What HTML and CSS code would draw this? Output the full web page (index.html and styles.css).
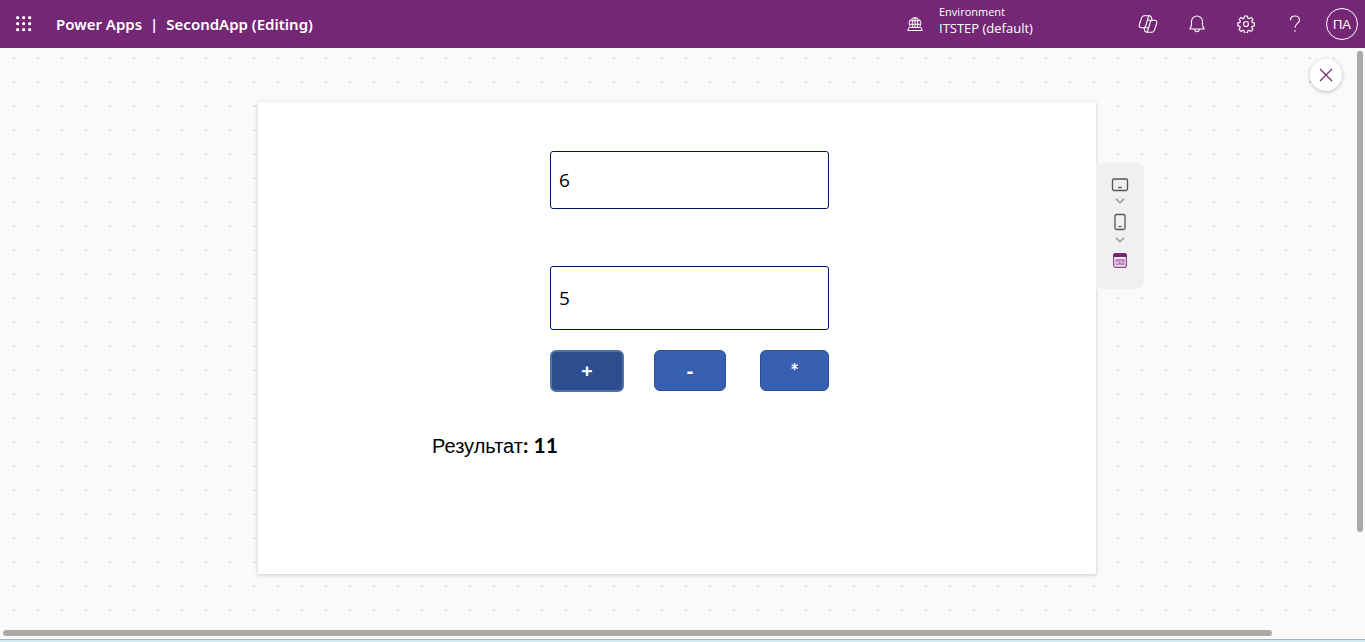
FILE: index.html
```html
<!DOCTYPE html>
<html lang="en">
<head>
<meta charset="utf-8">
<meta name="viewport" content="width=device-width, initial-scale=1">
<title>Power Apps | SecondApp (Editing)</title>
<link rel="stylesheet" href="styles.css">
</head>
<body>
<header class="topbar">
  <button class="icon-button" aria-label="App launcher">
    <svg width="16" height="16" viewBox="0 0 16 16" fill="currentColor"><circle cx="1.7" cy="1.7" r="1.6"/><circle cx="7.7" cy="1.7" r="1.6"/><circle cx="13.7" cy="1.7" r="1.6"/><circle cx="1.7" cy="7.7" r="1.6"/><circle cx="7.7" cy="7.7" r="1.6"/><circle cx="13.7" cy="7.7" r="1.6"/><circle cx="1.7" cy="13.7" r="1.6"/><circle cx="7.7" cy="13.7" r="1.6"/><circle cx="13.7" cy="13.7" r="1.6"/></svg>
  </button>
  <h1 class="title"><a class="home" href="#">Power Apps</a><span>|</span><span>SecondApp (Editing)</span></h1>
  <button class="environment">
    <svg width="16" height="16" viewBox="0 0 16 16" fill="none" stroke="currentColor" stroke-width="1"><path d="M3.200 10.500A5.700 5.700 0 1 1 12.800 10.500M2.800 4.700h10.400M2.400 8.300h11.200M5.800 11C4.800 8 5 3.500 8 1.500C11 3.500 11.200 8 10.200 11M8 1.500V11"/><path d="M3.500 11.500H2L.7 14.500H15.300L14 11.500H12.500M3.500 11.500h9"/></svg>
    <span class="environment-text"><span class="environment-label">Environment</span><span class="environment-name">ITSTEP (default)</span></span>
  </button>
  <nav class="tools" aria-label="Tools">
    <button class="icon-button tool" aria-label="Copilot">
      <svg width="20" height="18" viewBox="0 0 20 18" fill="none" stroke="currentColor" stroke-width="1.1" stroke-linejoin="round"><path d="M14 4.800L13.400 2.500C13.100 1.400 12.400.8 11.300.8H6.100C4.900.8 4.100 1.500 3.700 2.700L1.400 9.300C.7 11.500 1.700 12.800 3.700 12.800H5.400C6.600 12.800 7.300 12.200 7.700 11L10.200 2.500C10.500 1.400 11 .8 12 .8"/><path d="M6 12.800L6.600 15.500C6.900 16.600 7.600 17.200 8.700 17.200H13.900C15.100 17.200 15.900 16.500 16.300 15.300L18.600 8.700C19.300 6.300 18.300 5.200 16.300 5.200H14.600C13.400 5.200 12.700 5.800 12.300 7L9.800 15.500C9.500 16.600 9 17.200 8 17.200"/><path d="M9.400 5.200h5.200M5.400 12.800h5.200"/></svg>
    </button>
    <button class="icon-button tool" aria-label="Notifications">
      <svg width="16" height="18" viewBox="0 0 16 18" fill="none" stroke="currentColor" stroke-width="1.100" stroke-linejoin="round"><path d="M8 1A5.500 5.500 0 0 0 2.500 6.500V10.500L.8 14H15.200L13.500 10.500V6.500A5.500 5.500 0 0 0 8 1zM5.800 14.300A2.200 2.400 0 0 0 10.200 14.300"/></svg>
    </button>
    <button class="icon-button tool" aria-label="Settings">
      <svg width="18" height="18" viewBox="0 0 18 18" fill="none" stroke="currentColor" stroke-width="1.200" stroke-linejoin="round"><circle cx="9" cy="9" r="2.500"/><path d="M7.500 1h3l.4 2.200 1.200.5 1.900-1.300 2 2-1.300 1.900.6 1.300 2.100.3v2.900l-2.200.5-.5 1.200 1.300 1.900-2 2-1.900-1.200-1.200.5-.4 2.300h-3l-.4-2.300-1.200-.5-1.900 1.200-2-2 1.300-1.900-.5-1.200L.8 10.800V7.900l2-.3.6-1.300-1.300-1.900 2-2L6 3.700l1.100-.5z"/></svg>
    </button>
    <button class="icon-button tool" aria-label="Help">
      <svg width="12" height="18" viewBox="0 0 12 18" fill="none" stroke="currentColor" stroke-width="1.200"><path d="M1.400 5.300C1.400 2.700 3.200 1 5.800 1S10.500 2.600 10.500 4.900C10.500 8.200 6 8.600 6 12.700"/><path d="M6 15.200v1.500"/></svg>
    </button>
    <button class="avatar" aria-label="Account">ПА</button>
  </nav>
</header>
<main class="stage">
  <div class="workspace">
    <section class="canvas" aria-label="App preview">
      <div class="form">
        <input class="field" type="text" value="6" aria-label="First number">
        <input class="field field-tall" type="text" value="5" aria-label="Second number">
        <div class="operations">
          <button class="operation operation-active">+</button>
          <button class="operation">-</button>
          <button class="operation operation-star">*</button>
        </div>
      </div>
      <p class="result">Результат<b>: 11</b></p>
    </section>
    <aside class="devices" aria-label="Device size">
      <button aria-label="Tablet"><svg width="18" height="14" viewBox="0 0 18 14" fill="none" stroke="currentColor" stroke-width="1.300"><rect x="1.500" y="1" width="15" height="11.500" rx="1.500"/><path d="M7 9.500h4"/></svg></button>
      <button class="device-more" aria-label="Tablet options"><svg width="10" height="6" viewBox="0 0 10 6" fill="none" stroke="currentColor" stroke-width="1.500"><path d="M1 .8L5 4.700L9 .8"/></svg></button>
      <button class="device-phone" aria-label="Phone"><svg width="12" height="18" viewBox="0 0 12 18" fill="none" stroke="currentColor" stroke-width="1.300"><rect x="1" y="1.500" width="10" height="15" rx="1.500"/><path d="M4.500 13.500h3"/></svg></button>
      <button class="device-more" aria-label="Phone options"><svg width="10" height="6" viewBox="0 0 10 6" fill="none" stroke="currentColor" stroke-width="1.500"><path d="M1 .8L5 4.700L9 .8"/></svg></button>
      <button class="device-selected" aria-label="Fit to window"><svg width="14" height="15" viewBox="0 0 14 15"><rect x=".6" y=".6" width="12.800" height="13.800" rx="2.500" fill="#efe3ef" stroke="#8a478a" stroke-width="1.200"/><path d="M0 4V2.500Q0 0 2.500 0h9Q14 0 14 2.500V4z" fill="#742774"/><path d="M2.500 6h9v6h-9z" fill="#b583b5"/><path d="M4 11V9h2M8 7.500v2h2" fill="none" stroke="#efe3ef" stroke-width="1"/></svg></button>
    </aside>
  </div>
  <button class="close" aria-label="Close preview"><svg width="14" height="14" viewBox="0 0 14 14" fill="none" stroke="currentColor" stroke-width="1.200"><path d="M1 1l12 12M13 1L1 13"/></svg></button>
  <div class="scroll scroll-y"></div>
  <div class="scroll scroll-x"></div>
</main>
<footer class="edge"></footer>
</body>
</html>
```
FILE: styles.css
```css
* { box-sizing: border-box; }
body {
  margin: 0;
  min-height: 100vh;
  display: flex;
  flex-direction: column;
  font-family: "Open Sans", "Noto Sans", sans-serif;
  color: #000;
}
button { margin: 0; padding: 0; border: 0; background: none; color: inherit; font: inherit; cursor: pointer; }
svg { display: block; }

.topbar {
  display: flex;
  align-items: center;
  height: 48px;
  padding-right: 7px;
  background: #742774;
  color: #fff;
}
.icon-button { display: grid; place-items: center; width: 48px; height: 48px; }
.tool { width: 49px; }
.title {
  display: flex;
  gap: 8px;
  flex: 1;
  margin: 0;
  padding-left: 8px;
  font: 600 15px/24px "Noto Sans", sans-serif;
  white-space: nowrap;
}
.home { color: inherit; text-decoration: none; }
.environment { display: flex; align-items: center; gap: 16px; width: 216px; text-align: left; }
.environment-text { display: flex; flex-direction: column; padding-bottom: 8px; white-space: nowrap; }
.environment-label { font-size: 11px; line-height: 16px; }
.environment-name { font-size: 13px; line-height: 16px; }
.tools { display: flex; align-items: center; }
.avatar {
  width: 32px;
  height: 32px;
  margin-left: 7px;
  border: 1px solid #fff;
  border-radius: 50%;
  font: 13px/32px "Liberation Sans", sans-serif;
}

.stage {
  position: relative;
  display: flex;
  flex: 1;
  padding: 0 11px 11px 0;
  background: #fafafa;
}
.workspace {
  flex: 1;
  display: grid;
  grid-template-columns: 1fr minmax(0, 838px) 1fr;
  padding: 54px 0;
  background: conic-gradient(from 270deg at 2px 2px, #dedede 90deg, transparent 0) 13px 9px / 24px 24px;
}
.canvas {
  grid-column: 2;
  align-self: start;
  min-height: 472px;
  padding: 49px 0;
  background: #fff;
  box-shadow: 0 1px 4px rgba(0, 0, 0, 0.2);
}
.form { display: flex; flex-direction: column; width: 279px; margin-left: 292px; }
.field {
  width: 100%;
  height: 58px;
  padding: 0 8px;
  border: 1px solid #00126b;
  border-radius: 3px;
  background: #fff;
  font: 19px/24px "Open Sans", sans-serif;
  color: #000;
}
.field-tall { height: 64px; margin-top: 57px; }
.operations { display: flex; align-items: start; gap: 30px; margin-top: 20px; }
.operation {
  width: 72px;
  height: 41px;
  border: 1px solid #2d4e91;
  border-radius: 6px;
  background: #3860b2;
  color: #fff;
  font-size: 20px;
  font-weight: 700;
  line-height: 24px;
}
.operation-active { width: 74px; height: 42px; border: 2px solid #5472aa; background: #2d4d8e; }
.operation-star { width: 69px; margin-left: auto; font-family: Lato, sans-serif; }
.result { margin: 41px 0 0 174px; font: 20px/24px "Liberation Sans", sans-serif; }
.result b { font-family: Lato, sans-serif; font-size: 21px; }

.devices {
  display: flex;
  flex-direction: column;
  align-items: center;
  justify-self: start;
  align-self: start;
  width: 48px;
  height: 126px;
  margin-top: 61px;
  padding-top: 15px;
  border-radius: 0 8px 8px 0;
  background: #f0f0f0;
  color: #555;
}
.device-more { margin: 6px 0; color: #999; }
.device-phone { margin-top: 3px; }
.device-selected { margin-top: 4px; }

.close {
  position: absolute;
  top: 11px;
  right: 23px;
  display: grid;
  place-items: center;
  width: 32px;
  height: 32px;
  border-radius: 50%;
  background: #fff;
  color: #742774;
  box-shadow: 0 1px 4px rgba(0, 0, 0, 0.25);
}
.scroll { position: absolute; border-radius: 3px; background: #a9a9a9; }
.scroll-y { top: 3px; right: 2px; width: 6px; height: 481px; }
.scroll-x { bottom: 3px; left: 3px; width: 93%; height: 6px; }
.edge { height: 3px; border-top: 1px solid #a3b6c2; background: #d2e9f0; }
```
